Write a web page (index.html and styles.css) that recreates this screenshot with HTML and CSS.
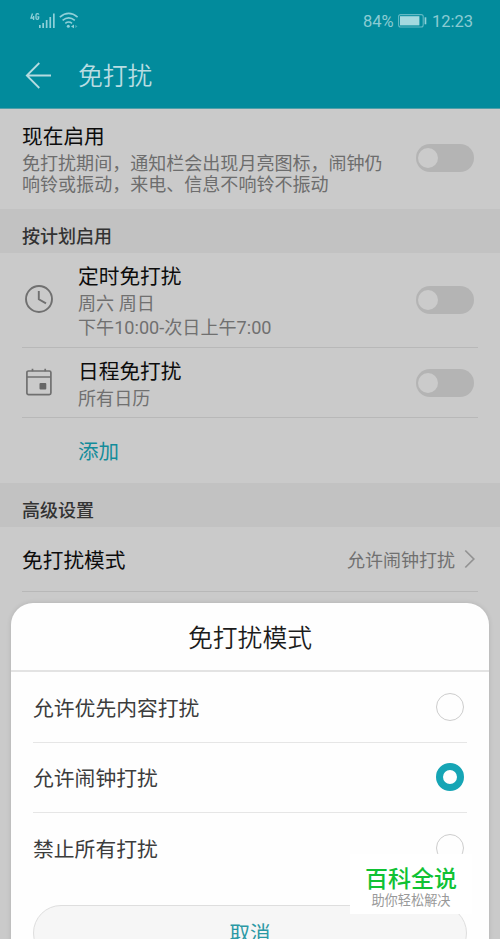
FILE: index.html
```html
<!DOCTYPE html>
<html lang="zh-CN">
<head>
<meta charset="utf-8">
<title>免打扰</title>
<link rel="stylesheet" href="styles.css">
</head>
<body>
<div class="screen">
  <header class="topbar">
    <div class="status">
      <svg class="status-icons" width="52" height="20" viewBox="0 0 52 20">
        <g fill="none" stroke="#8fd0d8" stroke-width="1.3">
          <path d="M2.5 3.5L1 8H4.3M3.6 6V10"/>
          <path d="M8.8 4.6Q8.5 3.7 7.3 3.7Q6 3.7 6 5V8Q6 9.4 7.3 9.4Q8.7 9.4 8.7 8V6.8H7.3"/>
        </g>
        <g fill="#8fd0d8">
          <rect x="9" y="15" width="1.7" height="3"/>
          <rect x="12.3" y="13" width="1.7" height="5"/>
          <rect x="15.8" y="10" width="1.7" height="8"/>
          <rect x="19.4" y="7" width="1.7" height="11"/>
          <rect x="23" y="3.5" width="1.7" height="14.5"/>
          <circle cx="38.3" cy="16.2" r="1.5"/>
          <path d="M41 16.4L44 14.6V18.2Z"/>
          <path opacity=".5" d="M47.5 16.4L45.3 14.8V18Z"/>
        </g>
        <g fill="none" stroke="#8fd0d8" stroke-width="1.6">
          <path d="M29.8 7.1Q38.7-.2 47.6 7.1"/>
          <path d="M32.6 10.4Q38.7 5.3 44.8 10.4"/>
          <path d="M35.3 13.3Q38.7 10.7 42 13.3"/>
        </g>
      </svg>
      <div class="status-right">
        <span class="percent">84%</span>
        <svg class="battery" width="29" height="14" viewBox="0 0 29 14">
          <rect x=".6" y=".6" width="24.6" height="12.4" rx="2" fill="none" stroke="#62b9c4" stroke-width="1.1"/>
          <rect x="2" y="2.2" width="19.4" height="9.2" fill="#a3d9df"/>
          <rect x="26.6" y="3.3" width="1.7" height="7" fill="#8fd0d8"/>
        </svg>
        <span class="time">12:23</span>
      </div>
    </div>
    <div class="titlebar">
      <svg width="27" height="27" viewBox="0 0 27 27" fill="none" stroke="#b5dbe0" stroke-width="1.8">
        <path d="M26 13.5H1.5M14.3 1L1.8 13.5L14.3 26"/>
      </svg>
      <h1>免打扰</h1>
    </div>
  </header>

  <section class="row row-now">
    <div class="text">
      <div class="name">现在启用</div>
      <p class="desc">免打扰期间，通知栏会出现月亮图标，闹钟仍<br>响铃或振动，来电、信息不响铃不振动</p>
    </div>
    <span class="toggle"></span>
  </section>

  <h2 class="group">按计划启用</h2>
  <div class="rows">
    <div class="row row-time">
      <svg class="icon" width="30" height="30" viewBox="0 0 30 30" fill="none" stroke="#707070" stroke-width="1.9">
        <circle cx="15" cy="15" r="13"/><path d="M14.8 7V15.3L22 19.4"/>
      </svg>
      <div class="text">
        <div class="name">定时免打扰</div>
        <div class="sub">周六 周日</div>
        <div class="sub">下午10:00-次日上午7:00</div>
      </div>
      <span class="toggle"></span>
    </div>
    <div class="row row-calendar">
      <svg class="icon" width="30" height="30" viewBox="0 0 30 30" fill="none" stroke="#707070" stroke-width="1.7">
        <rect x="2.9" y="4" width="24" height="23.6" rx="1.6"/><path d="M3 10H27M8.5 1.8V4.2M21.2 1.8V4.2"/>
        <rect x="15.5" y="15.9" width="6.8" height="6.5" rx="1" fill="#666" stroke="none"/>
      </svg>
      <div class="text">
        <div class="name">日程免打扰</div>
        <div class="sub">所有日历</div>
      </div>
      <span class="toggle"></span>
    </div>
    <div class="add">添加</div>
  </div>

  <h2 class="group">高级设置</h2>
  <div class="rows">
    <div class="row row-mode">
      <div class="name">免打扰模式</div>
      <div class="value">允许闹钟打扰
        <svg width="12" height="20" viewBox="0 0 12 20" fill="none" stroke="#929292" stroke-width="1.7"><path d="M1.3 1.5L9.8 10L1.3 18.5"/></svg>
      </div>
    </div>
  </div>

  <div class="sheet">
    <div class="sheet-title">免打扰模式</div>
    <div class="options">
      <div class="option"><span>允许优先内容打扰</span><i class="radio"></i></div>
      <div class="option"><span>允许闹钟打扰</span><i class="radio selected"></i></div>
      <div class="option"><span>禁止所有打扰</span><i class="radio"></i></div>
    </div>
    <div class="cancel">取消</div>
  </div>

  <div class="brand">
    <div class="brand-name">百科全说</div>
    <div class="brand-tag">助你轻松解决</div>
  </div>
</div>
</body>
</html>
```
FILE: styles.css
```css
* { box-sizing: border-box; }
body {
  margin: 0;
  font-family: Roboto, "Noto Sans CJK SC", sans-serif;
}
h1, h2, p { margin: 0; font-weight: 400; }
svg { display: block; flex: none; }

.screen {
  position: relative;
  width: 500px;
  height: 939px;
  overflow: hidden;
  background: #cacaca;
}

.topbar {
  height: 109px;
  background: #028b9c;
  border-bottom: 1px solid #4f9fa9;
}
.status {
  display: flex;
  justify-content: space-between;
  height: 44px;
  padding: 10px 28px 0 30px;
}
.status-right {
  display: flex;
  align-items: center;
  height: 23px;
  color: #8bcbd3;
  font-size: 16.5px;
}
.percent { width: 35px; }
.battery { margin-top: -1px; }
.time { width: 40px; margin-left: 5px; }
.titlebar {
  display: flex;
  align-items: center;
  gap: 26px;
  height: 62px;
  padding-left: 25px;
}
.titlebar h1 {
  padding-top: 4px;
  color: #b9dde2;
  font-size: 24.8px;
  line-height: 36px;
  font-weight: 350;
}

.row { display: flex; }
.text { flex: 1; }
.name { color: #0c0c0c; font-size: 20.7px; line-height: 28px; }
.desc { color: #6d6d6d; font-size: 18.05px; line-height: 21px; white-space: nowrap; }
.sub { color: #707070; font-size: 18.1px; line-height: 24px; }
.toggle {
  flex: none;
  width: 58px;
  height: 28px;
  padding: 4px 2px;
  border-radius: 14px;
  background: #b4b4b4;
}
.toggle::before {
  content: "";
  display: block;
  width: 20px;
  height: 20px;
  border-radius: 50%;
  background: #cbcbcb;
}

.row-now { height: 100px; padding: 14px 26px 0 22px; }
.row-now .name { margin-bottom: 2px; }
.row-now .toggle { margin-top: 21px; }
.group {
  height: 44px;
  padding: 6px 22px 0;
  background: #c2c2c2;
  color: #333;
  font-size: 18px;
  line-height: 44px;
  font-weight: 500;
}
.rows { padding: 0 22px; }
.rows .row { border-bottom: 1px solid #b8b8b8; }
.icon { margin: 0 24px 0 2px; }
.row-time { height: 95px; padding: 10px 4px 0 0; }
.row-time .icon { margin-top: 21px; }
.row-time .toggle { margin-top: 23px; }
.row-time .name { margin-bottom: 1px; }
.row-calendar { height: 70px; padding: 10px 4px 0 0; }
.row-calendar .icon { margin-top: 9px; }
.row-calendar .toggle { margin-top: 11px; }
.row-calendar .name { margin-bottom: 1px; }
.add {
  height: 65px;
  padding: 2px 0 0 56px;
  color: #138c9a;
  font-size: 20.5px;
  line-height: 65px;
}
.row-mode { height: 65px; align-items: center; justify-content: space-between; }
.row-mode .name { padding-top: 3px; }
.value {
  display: flex;
  align-items: center;
  gap: 9px;
  padding-right: 2px;
  color: #707070;
  font-size: 18px;
}

/* Bottom sheet and brand tag lie over the settings page. */
.sheet {
  position: absolute;
  left: 11px;
  right: 11px;
  top: 603px;
  height: 360px;
  border-radius: 22px 22px 0 0;
  background: #fefefe;
  box-shadow: 0 0 5px rgba(0, 0, 0, .12);
}
.sheet-title {
  height: 69px;
  padding-top: 2px;
  border-bottom: 2px solid #e3e3e3;
  color: #1c1c1c;
  font-size: 24.8px;
  font-weight: 350;
  line-height: 68px;
  text-align: center;
}
.options { padding: 0 22px; }
.option {
  display: flex;
  align-items: center;
  justify-content: space-between;
  height: 70.5px;
  padding-right: 3px;
  border-bottom: 1px solid #e6e6e6;
  color: #3c3c3c;
  font-size: 20.8px;
}
.option:last-child { border-bottom: 0; }
.radio {
  width: 28px;
  height: 28px;
  border: 1.5px solid #cdcdcd;
  border-radius: 50%;
}
.radio.selected { border: 7px solid #16a5b5; }
.cancel {
  height: 56px;
  margin: 21px 22px 0;
  padding-top: 1px;
  border: 1px solid #dedede;
  border-radius: 28px;
  background: #f6f6f6;
  color: #2b99a5;
  font-size: 20.5px;
  line-height: 54px;
  text-align: center;
}
.brand {
  position: absolute;
  left: 350px;
  top: 854px;
  width: 122px;
  height: 60px;
  padding-top: 11px;
  background: #fff;
  text-align: center;
  white-space: nowrap;
}
.brand-name { color: #10c234; font-size: 23px; line-height: 30px; font-weight: 500; }
.brand-tag { color: #999; font-size: 13.2px; line-height: 12px; }
```
